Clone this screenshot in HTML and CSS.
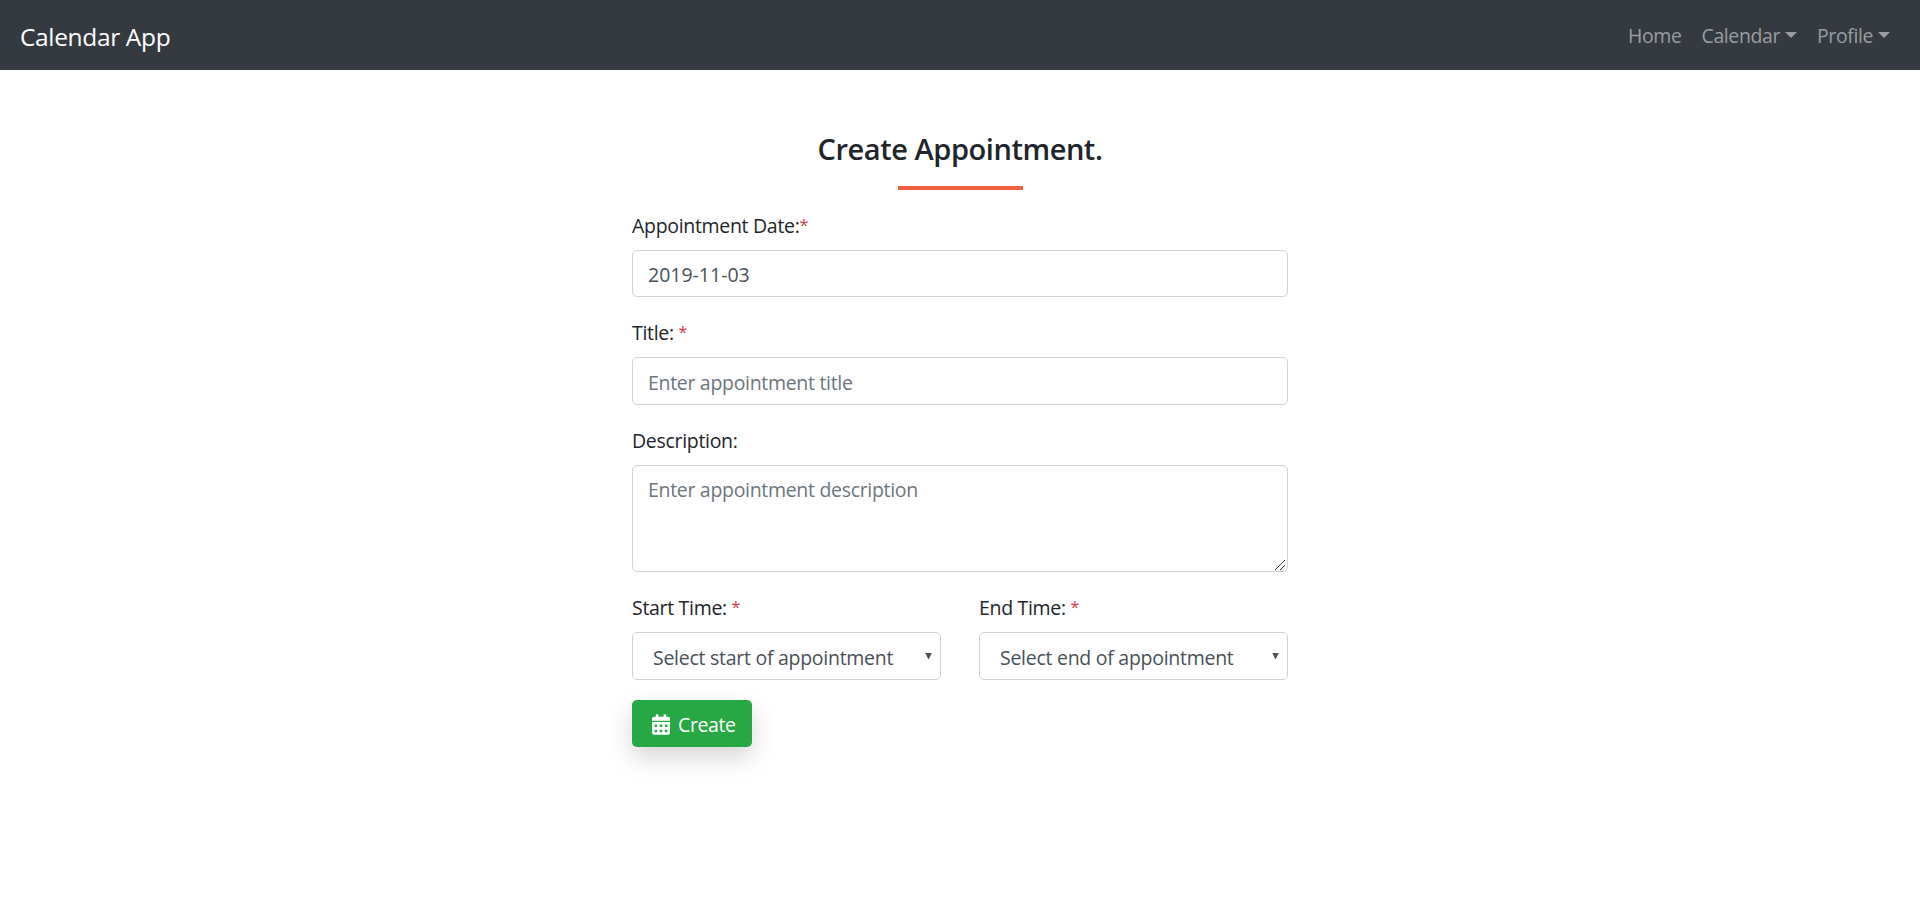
FILE: index.html
```html
<!DOCTYPE html>
<html lang="en">
<head>
<meta charset="utf-8">
<title>Calendar App</title>
<link rel="stylesheet" href="styles.css">
</head>
<body>
<nav class="navbar">
  <a class="brand">Calendar App</a>
  <div class="nav-links">
    <a class="nav-link">Home</a>
    <a class="nav-link">Calendar<i class="caret"></i></a>
    <a class="nav-link">Profile<i class="caret"></i></a>
  </div>
</nav>
<main class="content">
  <h1 class="heading">Create Appointment.</h1>
  <div class="rule"></div>
  <form class="form">
    <div class="group">
      <label class="label">Appointment Date:<span class="req">*</span></label>
      <input class="control control-date" type="text" value="2019-11-03">
    </div>
    <div class="group">
      <label class="label">Title: <span class="req">*</span></label>
      <input class="control" type="text" placeholder="Enter appointment title">
    </div>
    <div class="group">
      <label class="label">Description:</label>
      <div class="area-wrap">
        <textarea class="control area" placeholder="Enter appointment description"></textarea>
        <svg class="grip" width="12" height="12" viewBox="0 0 12 12"><path d="M1 11L11 1M6 11L11 6" stroke="#444" stroke-width="1" fill="none"/></svg>
      </div>
    </div>
    <div class="row">
      <div>
        <label class="label">Start Time: <span class="req">*</span></label>
        <div class="select"><span>Select start of appointment</span><i class="arrow"></i></div>
      </div>
      <div>
        <label class="label">End Time: <span class="req">*</span></label>
        <div class="select"><span>Select end of appointment</span><i class="arrow"></i></div>
      </div>
    </div>
    <button class="button" type="button">
      <svg class="icon" viewBox="0 0 448 512"><path fill="#fff" d="M0 464c0 26.500 21.500 48 48 48h352c26.500 0 48-21.500 48-48V192H0v272zm320-196c0-6.600 5.400-12 12-12h40c6.600 0 12 5.400 12 12v40c0 6.600-5.400 12-12 12h-40c-6.600 0-12-5.400-12-12v-40zm0 128c0-6.600 5.400-12 12-12h40c6.600 0 12 5.400 12 12v40c0 6.600-5.400 12-12 12h-40c-6.600 0-12-5.400-12-12v-40zM192 268c0-6.600 5.400-12 12-12h40c6.600 0 12 5.400 12 12v40c0 6.600-5.400 12-12 12h-40c-6.600 0-12-5.400-12-12v-40zm0 128c0-6.600 5.400-12 12-12h40c6.600 0 12 5.400 12 12v40c0 6.600-5.400 12-12 12h-40c-6.600 0-12-5.400-12-12v-40zM64 268c0-6.600 5.400-12 12-12h40c6.600 0 12 5.400 12 12v40c0 6.600-5.400 12-12 12H76c-6.600 0-12-5.400-12-12v-40zm0 128c0-6.600 5.400-12 12-12h40c6.600 0 12 5.400 12 12v40c0 6.600-5.400 12-12 12H76c-6.600 0-12-5.400-12-12v-40zM400 64h-48V16c0-8.800-7.200-16-16-16h-32c-8.800 0-16 7.200-16 16v48H160V16c0-8.800-7.200-16-16-16h-32c-8.800 0-16 7.200-16 16v48H48C21.500 64 0 85.500 0 112v48h448v-48c0-26.500-21.500-48-48-48z"/></svg>
      <span>Create</span>
    </button>
  </form>
</main>
</body>
</html>
```
FILE: styles.css
```css
* { box-sizing: border-box; }
body {
  margin: 0;
  min-height: 902px;
  background: #fff;
  color: #212529;
  font: 19.5px/30px "Open Sans", sans-serif;
  letter-spacing: -.31px;
}
.navbar {
  height: 70px;
  padding: 0 30px 0 20px;
  background: #343a40;
  display: flex;
  align-items: center;
  justify-content: space-between;
}
.brand { color: #fff; font-size: 24.5px; line-height: 38px; margin-top: 3px; letter-spacing: -.35px; }
.nav-links { display: flex; gap: 20px; margin-top: 1px; }
.nav-link { color: #9a9da0; display: flex; align-items: center; letter-spacing: -.4px; }
.caret {
  margin: 0 0 1px 5px;
  border: 6px solid transparent;
  border-top-color: #9a9da0;
  border-bottom: 0;
}
.content { width: 656px; margin: 0 auto; padding-top: 59px; }
.heading { margin: 0; font-size: 29px; font-weight: 600; line-height: 40px; text-align: center; white-space: nowrap; letter-spacing: -.45px; }
.rule { width: 125px; height: 4px; margin: 17px auto 0; background: #f05f40; }
.form { padding-top: 21px; }
.group { margin-bottom: 21px; }
.label { display: block; height: 30px; margin-bottom: 9px; white-space: pre; }
.req { color: #dc3545; font-size: 16px; line-height: 1; vertical-align: 2px; }
.control, .select {
  display: block;
  width: 100%;
  height: 48px;
  padding: 3px 15px 0;
  border: 1px solid #ced4da;
  border-radius: 5px;
  background: #fff;
  color: #495057;
  font: inherit;
  letter-spacing: inherit;
}
.control-date { height: 47px; padding-top: 2px; letter-spacing: 0; }
.control::placeholder { color: #6c757d; opacity: 1; }
.area-wrap { position: relative; }
.area { height: 107px; padding-top: 9px; resize: none; }
.grip { position: absolute; right: 2px; bottom: 1px; }
.row { display: grid; grid-template-columns: 309px 309px; gap: 38px; margin-bottom: 20px; }
.select { display: flex; align-items: center; justify-content: space-between; padding: 4px 8px 0 20px; letter-spacing: -.27px; }
.arrow { width: 7px; height: 7px; margin-bottom: 4px; background: #495057; clip-path: polygon(0 0, 100% 0, 50% 100%); }
.button {
  display: flex;
  align-items: center;
  width: 120px;
  height: 47px;
  padding: 2px 0 0 20px;
  border: 0;
  border-radius: 5px;
  background: #28a745;
  color: #fff;
  font: inherit;
  letter-spacing: -.4px;
  box-shadow: 0 10px 25px rgba(0, 0, 0, .17);
}
.icon { width: 18px; height: 21px; margin-right: 8px; }
```
